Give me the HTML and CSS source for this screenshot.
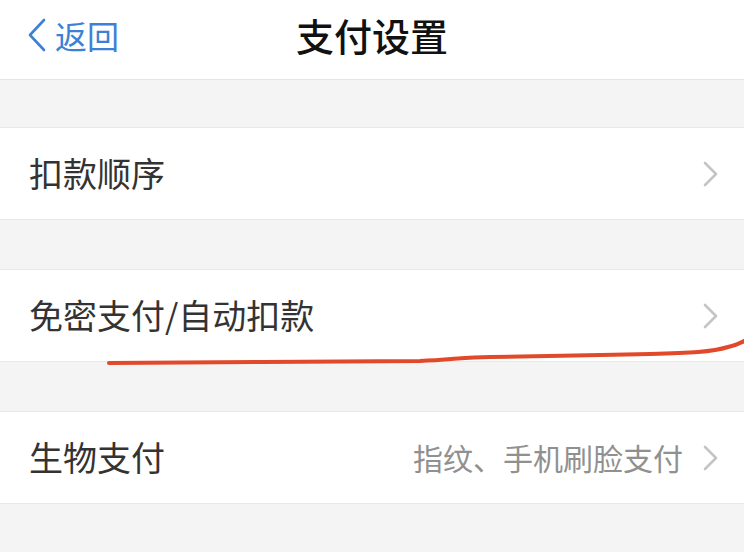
FILE: index.html
```html
<!DOCTYPE html>
<html lang="zh-CN">
<head>
<meta charset="utf-8">
<title>支付设置</title>
<link rel="stylesheet" href="styles.css">
</head>
<body>
<div class="page">
  <header class="nav">
    <div class="back">
      <svg class="back-icon" width="20" height="34" viewBox="0 0 20 34"><polyline points="17,2 3,17 17,32" fill="none" stroke="#3d80d4" stroke-width="2.6" stroke-linecap="round" stroke-linejoin="round"/></svg>
      <span class="back-text">返回</span>
    </div>
    <h1 class="title">支付设置</h1>
    <div class="nav-right"></div>
  </header>

  <div class="gap gap-first"></div>
  <div class="row">
    <span class="label">扣款顺序</span>
    <span class="right">
      <svg class="chev" width="16" height="26" viewBox="0 0 16 26"><polyline points="3,2 14,13 3,24" fill="none" stroke="#c4c4c8" stroke-width="2.6" stroke-linecap="round" stroke-linejoin="round"/></svg>
    </span>
  </div>
  <div class="gap"></div>
  <div class="row">
    <span class="label">免密支付/自动扣款</span>
    <span class="right">
      <svg class="chev" width="16" height="26" viewBox="0 0 16 26"><polyline points="3,2 14,13 3,24" fill="none" stroke="#c4c4c8" stroke-width="2.6" stroke-linecap="round" stroke-linejoin="round"/></svg>
    </span>
  </div>
  <div class="gap"></div>
  <div class="row">
    <span class="label">生物支付</span>
    <span class="right">
      <span class="value">指纹、手机刷脸支付</span>
      <svg class="chev" width="16" height="26" viewBox="0 0 16 26"><polyline points="3,2 14,13 3,24" fill="none" stroke="#c4c4c8" stroke-width="2.6" stroke-linecap="round" stroke-linejoin="round"/></svg>
    </span>
  </div>

  <svg class="mark" width="744" height="552" viewBox="0 0 744 552">
    <path d="M109,363 C200,362 330,362 420,361 C450,360 465,357 490,357 C560,356 600,355 650,354 C690,353 712,352 728,347 C736,345 741,343 746,340" fill="none" stroke="#e2492b" stroke-width="4" stroke-linecap="round"/>
  </svg>
</div>
</body>
</html>
```
FILE: styles.css
```css
html, body {
  margin: 0;
  padding: 0;
}
body {
  background: #f4f4f4;
  font-family: "Noto Sans CJK SC", "Noto Sans", sans-serif;
  width: 744px;
  height: 552px;
  overflow: hidden;
}
.page {
  position: relative;
  width: 744px;
  height: 552px;
}
.nav {
  height: 79px;
  background: #ffffff;
  border-bottom: 1px solid #e6e6e6;
  display: grid;
  grid-template-columns: 1fr auto 1fr;
  align-items: center;
}
.back {
  display: flex;
  align-items: center;
  padding-left: 27px;
  margin-top: -10px;
}
.back-icon {
  display: block;
}
.back-text {
  color: #3d80d4;
  font-size: 32px;
  margin-left: 8px;
  line-height: 1;
}
.title {
  margin: 0;
  margin-top: -10px;
  font-size: 38px;
  font-weight: 500;
  color: #111111;
  line-height: 1;
}
.gap {
  height: 49px;
}
.gap-first {
  height: 47px;
}
.row {
  height: 91px;
  background: #ffffff;
  border-top: 1px solid #e8e8e8;
  border-bottom: 1px solid #e8e8e8;
  display: flex;
  align-items: center;
  justify-content: space-between;
  padding: 0 26px 0 29px;
}
.label {
  font-size: 34px;
  color: #333333;
  line-height: 1;
  margin-top: -2px;
}
.right {
  display: flex;
  align-items: center;
  gap: 19px;
}
.value {
  font-size: 30px;
  color: #909090;
  line-height: 1;
  margin-top: -2px;
}
.chev {
  display: block;
}
.mark {
  position: absolute;
  left: 0;
  top: 0;
  pointer-events: none;
}
```
